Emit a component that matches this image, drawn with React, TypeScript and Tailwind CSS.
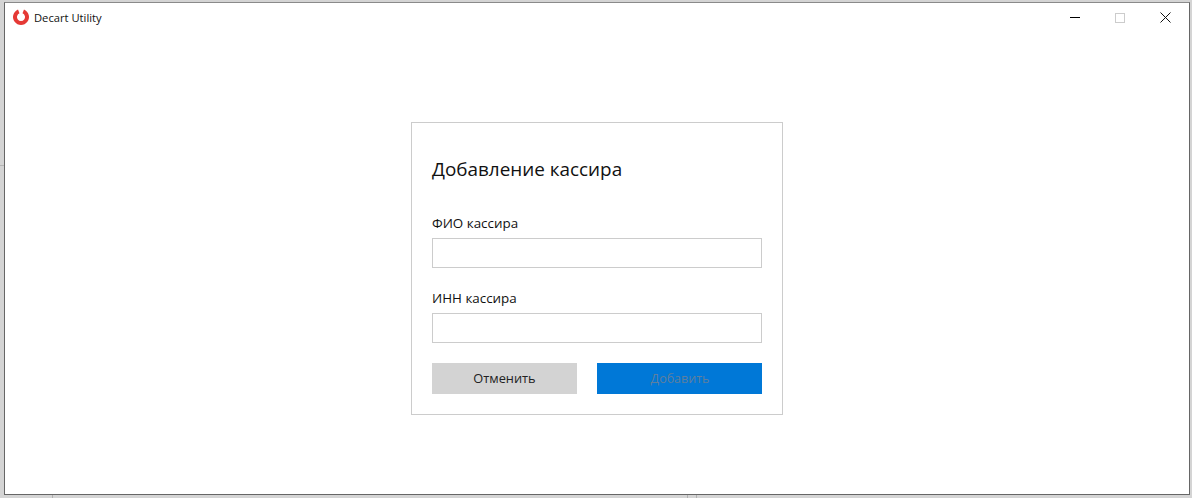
import React from "react";

const font = { fontFamily: '"Open Sans", "Noto Sans", sans-serif' };

function Field({ label }: { label: string }) {
  return (
    <div className="flex flex-col">
      <label className="text-[13.4px] leading-[18px] text-[#111] mb-[6px]">{label}</label>
      <input type="text" className="h-[30px] w-[330px] border border-[#cccccc] bg-white outline-none" />
    </div>
  );
}

export default function App() {
  return (
    <div className="relative w-[1192px] h-[498px] overflow-hidden bg-[#d4d4d4] pl-[4px] pt-[2px]" style={font}>
      {/* bits of the window behind */}
      <div className="absolute left-0 top-[165px] w-[4px] h-px bg-[#b5b5b5]" />
      <div className="absolute left-[52px] top-[495px] w-px h-[3px] bg-[#b0b0b0]" />
      <div className="absolute left-[687px] top-[495px] w-px h-[3px] bg-[#b0b0b0]" />
      <div className="absolute left-[696px] top-[495px] w-px h-[3px] bg-[#b0b0b0]" />

      <div className="flex flex-col w-[1186px] h-[493px] bg-white border border-[#666666] border-t-[#8a8a8a]">
        <div className="flex items-center h-[29px] shrink-0">
          <svg width="18" height="18" viewBox="0 0 18 18" className="ml-[7px] mr-[4px] mt-[-1px]">
            <path d="M6 1.6 A8 8 0 1 0 12 1.6 L10.5 5.3 A4 4 0 1 1 7.5 5.3 Z" fill="#e53935" />
          </svg>
          <span className="text-[11.2px] text-[#111] mt-[1px]">Decart Utility</span>
          <div className="ml-auto flex items-center">
            <div className="w-[46px] h-[29px] pl-[2px] flex items-center justify-center">
              <div className="w-[10px] h-px bg-black" />
            </div>
            <div className="w-[46px] h-[29px] flex items-center justify-center">
              <div className="w-[10px] h-[10px] border border-[#cccccc]" />
            </div>
            <div className="w-[46px] h-[29px] pr-[1px] flex items-center justify-center">
              <svg width="11" height="11" viewBox="0 0 11 11">
                <path d="M0.5 0.5 L10.5 10.5 M10.5 0.5 L0.5 10.5" stroke="#111" strokeWidth="1" fill="none" />
              </svg>
            </div>
          </div>
        </div>

        <div className="flex-1 flex justify-center">
          <div className="mt-[90px] h-[293px] w-[372px] border border-[#cccccc] px-[20px] flex flex-col">
            <h1 className="mt-[32px] text-[18.9px] leading-[28px] font-normal text-[#111]">Добавление кассира</h1>
            <div className="mt-[31px] flex flex-col gap-[21px]">
              <Field label="ФИО кассира" />
              <Field label="ИНН кассира" />
            </div>
            <div className="mt-[20px] flex justify-between w-[330px]">
              <button className="w-[145px] h-[31px] pt-[1px] bg-[#d3d3d3] text-[12.8px] text-[#222]">Отменить</button>
              <button disabled className="w-[165px] h-[31px] pt-[2px] pl-[1px] bg-[#0078d7] text-[12.5px] text-[#5e7f9e]">Добавить</button>
            </div>
          </div>
        </div>
      </div>
    </div>
  );
}
